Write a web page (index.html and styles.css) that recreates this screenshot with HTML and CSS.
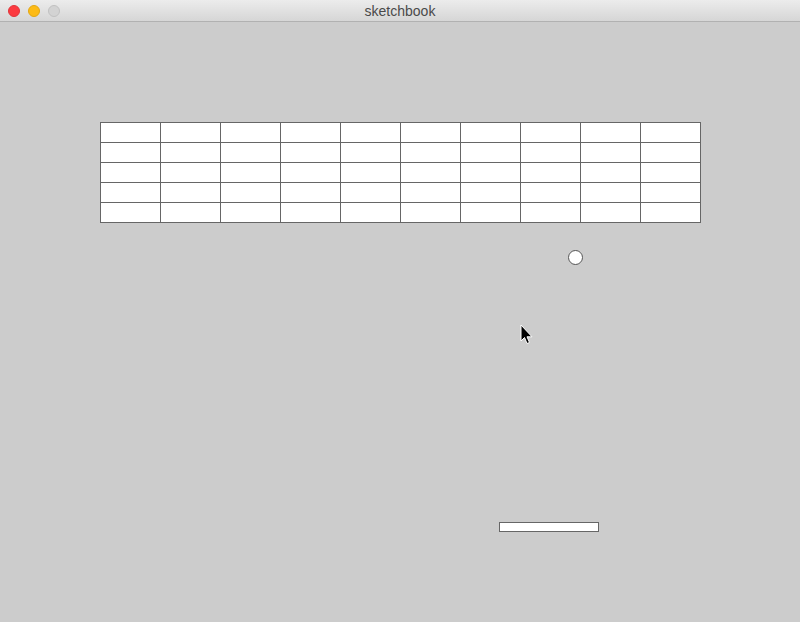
FILE: index.html
```html
<!DOCTYPE html>
<html>
<head>
<meta charset="utf-8">
<link rel="stylesheet" href="styles.css">
</head>
<body>
<div class="window">
  <div class="titlebar">
    <div class="lights">
      <span class="light red"></span>
      <span class="light yellow"></span>
      <span class="light gray"></span>
    </div>
    <div class="title">sketchbook</div>
  </div>
  <div class="canvas">
    <div class="bricks">
      <div></div><div></div><div></div><div></div><div></div><div></div><div></div><div></div><div></div><div></div>
      <div></div><div></div><div></div><div></div><div></div><div></div><div></div><div></div><div></div><div></div>
      <div></div><div></div><div></div><div></div><div></div><div></div><div></div><div></div><div></div><div></div>
      <div></div><div></div><div></div><div></div><div></div><div></div><div></div><div></div><div></div><div></div>
      <div></div><div></div><div></div><div></div><div></div><div></div><div></div><div></div><div></div><div></div>
    </div>
    <div class="ball"></div>
    <div class="paddle"></div>
    <svg class="cursor" width="14" height="22" viewBox="0 0 14 22">
      <path d="M1 1 L1 17 L4.5 13.5 L7 19.5 L9.5 18.5 L7 12.8 L12 12.8 Z" fill="#000" stroke="#fff" stroke-width="1" stroke-linejoin="round"/>
    </svg>
  </div>
</div>
</body>
</html>
```
FILE: styles.css
```css
html, body {
  margin: 0;
  padding: 0;
}
body {
  width: 800px;
  height: 622px;
  overflow: hidden;
  background: #cccccc;
  font-family: "Liberation Sans", Arial, sans-serif;
}
.window {
  display: flex;
  flex-direction: column;
  height: 622px;
}
.titlebar {
  height: 21px;
  flex: none;
  position: relative;
  display: flex;
  align-items: center;
  justify-content: center;
  background: linear-gradient(#ececec, #d6d6d6);
  border-bottom: 1px solid #b1b1b1;
}
.lights {
  position: absolute;
  left: 8px;
  top: 5px;
  display: flex;
  gap: 8px;
}
.light {
  width: 12px;
  height: 12px;
  border-radius: 50%;
  box-sizing: border-box;
}
.red {
  background: #fc3a40;
  border: 1px solid #e0353a;
}
.yellow {
  background: #fdbb16;
  border: 1px solid #e3a712;
}
.gray {
  background: #d3d3d3;
  border: 1px solid #c1c1c1;
}
.title {
  font-size: 14px;
  color: #4a4a4a;
  padding-top: 1px;
}
.canvas {
  flex: 1;
  position: relative;
  padding: 100px 0 0 100px;
}
.bricks {
  display: grid;
  grid-template-columns: repeat(10, 60px);
  grid-auto-rows: 20px;
  width: 600px;
  border-left: 1px solid #666;
  border-top: 1px solid #666;
}
.bricks div {
  background: #fff;
  border-right: 1px solid #666;
  border-bottom: 1px solid #666;
}
.ball {
  position: absolute;
  left: 568px;
  top: 228px;
  width: 15px;
  height: 15px;
  box-sizing: border-box;
  border-radius: 50%;
  background: #fff;
  border: 1px solid #555;
}
.paddle {
  position: absolute;
  left: 499px;
  top: 500px;
  width: 100px;
  height: 10px;
  box-sizing: border-box;
  background: #fff;
  border: 1px solid #666;
}
.cursor {
  position: absolute;
  left: 520px;
  top: 302px;
}
```
